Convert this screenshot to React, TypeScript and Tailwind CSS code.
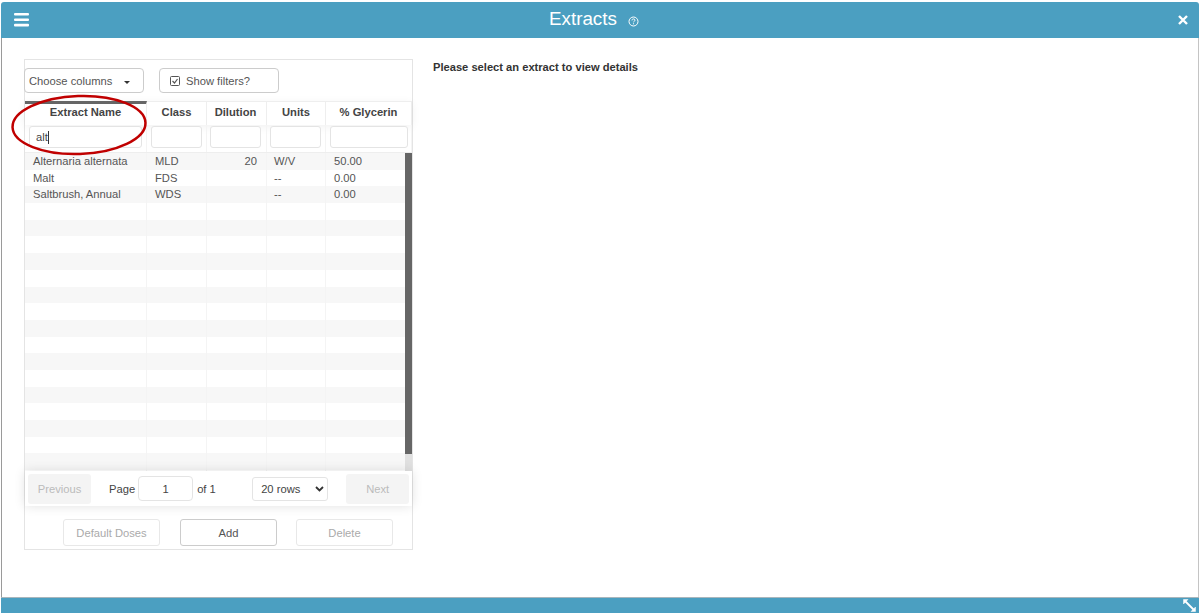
import React from "react";

const cols = [
  { name: "Extract Name", w: "w-[122px]", input: "w-[113px]" },
  { name: "Class", w: "w-[60px]", input: "w-[51px]" },
  { name: "Dilution", w: "w-[60px]", input: "w-[51px]" },
  { name: "Units", w: "w-[59px]", input: "w-[51px]" },
  { name: "% Glycerin", w: "w-[86px]", input: "w-[78px]" },
];

const data = [
  ["Alternaria alternata", "MLD", "20", "W/V", "50.00"],
  ["Malt", "FDS", "", "--", "0.00"],
  ["Saltbrush, Annual", "WDS", "", "--", "0.00"],
];

const rows: string[][] = [...data, ...Array.from({ length: 17 }, () => ["", "", "", "", ""])];

export default function App() {
  return (
    <div className="w-[1201px] h-[613px] overflow-hidden bg-white flex flex-col pt-[2px] pl-[1px] pr-[2px] text-[#333] text-[11.200px] font-['Liberation_Sans',Arial,sans-serif]">
      <header className="h-[36px] shrink-0 bg-[#4b9fc1] rounded-t-[3px] flex items-center justify-between pl-[13px] pr-[11px] relative">
        <svg width="15" height="14" viewBox="0 0 15 14" fill="#fff" className="mt-[-1px]">
          <rect x="0" y="0" width="15" height="2.6" rx="1" />
          <rect x="0" y="5.4" width="15" height="2.6" rx="1" />
          <rect x="0" y="10.8" width="15" height="2.6" rx="1" />
        </svg>
        <div className="absolute left-[548px] top-0 h-full flex items-center gap-[11px] text-white">
          <span className="text-[18.800px] leading-none mt-[-1px]">Extracts</span>
          <svg width="11" height="11" viewBox="0 0 11 11" fill="none" stroke="#fff" className="mt-[2px]">
            <circle cx="5.5" cy="5.5" r="4.5" strokeWidth="1" />
            <path d="M4 4.4c0-1 .7-1.5 1.5-1.5S7 3.400 7 4.200c0 1-1.500 1-1.500 2.100" strokeWidth="1" />
            <path d="M5.500 7.300v1" strokeWidth="1.100" />
          </svg>
        </div>
        <svg width="10" height="10" viewBox="0 0 10 10" stroke="#fff" strokeWidth="2.400">
          <path d="M1 1l8 8M9 1l-8 8" />
        </svg>
      </header>

      <main className="flex-1 min-h-0 border-x border-[#9a9a9a] border-r-[#c4c4c4] pl-[22px] pt-[21px] flex items-start">
        <section className="w-[389px] h-[491px] border border-[#e4e4e4] flex flex-col relative">
          <div className="h-[41px] shrink-0 pt-[8px] ml-[-1px] flex items-start">
            <div className="w-[120px] h-[25px] border border-[#ccc] rounded-[4px] flex items-center pl-[4px] pt-[1px] text-[#555]">
              <span>Choose columns</span>
              <svg width="6" height="3" viewBox="0 0 6 3" fill="#333" className="ml-[12px] mt-[3px]">
                <path d="M0 0h6L3 3z" />
              </svg>
            </div>
            <div className="w-[120px] h-[25px] ml-[15px] border border-[#ccc] rounded-[4px] flex items-center pl-[10px] pt-[1px] text-[#555]">
              <svg width="10" height="10" viewBox="0 0 10 10" fill="none" stroke="#555" className="mr-[6px]">
                <rect x="0.500" y="0.500" width="9" height="9" rx="1" />
                <path d="M2.500 5l2 2 3-4" strokeWidth="1.200" />
              </svg>
              <span>Show filters?</span>
            </div>
          </div>

          <div className="flex h-[24px] shrink-0 shadow-[0_2px_10px_rgba(0,0,0,0.06)]">
            {cols.map((c, i) => (
              <div
                key={c.name}
                className={`${c.w} flex items-center justify-center font-bold text-[#444] text-[11.200px] border-r border-[#eee] ${i === 0 ? "border-t-[3px] border-t-[#666] pb-[5px]" : "border-t border-t-[#eee] pb-[2px]"} ${i === 2 ? "pr-[2px]" : ""}`}
              >
                {c.name}
              </div>
            ))}
          </div>
          <div className="flex h-[28px] shrink-0 border-b border-[#eee]">
            {cols.map((c, i) => (
              <div key={c.name} className={`${c.w} flex justify-center pt-[1px] border-r border-[#f4f4f4] ${i === 2 || i === 3 ? "pr-[2px]" : ""}`}>
                <div className={`${c.input} h-[22px] border border-[#e4e4e4] rounded-[3px] bg-white flex items-center pl-[6px] text-[#444]`}>
                  {i === 0 && (
                    <>
                      <span>alt</span>
                      <span className="w-px h-[13px] bg-[#333]" />
                    </>
                  )}
                </div>
              </div>
            ))}
          </div>

          <div className="relative flex-1 min-h-0 overflow-hidden">
            {rows.map((r, ri) => (
              <div key={ri} className={`flex h-[16.700px] leading-[16.700px] text-[#555] ${ri % 2 === 0 ? "bg-[#f7f7f7]" : "bg-white"}`}>
                {r.map((v, ci) => (
                  <div
                    key={ci}
                    className={`${cols[ci].w} border-r border-[#f4f4f4] ${ci === 2 ? "text-right pr-[9px]" : ci === 3 ? "pl-[7px]" : "pl-[8px]"}`}
                  >
                    {v}
                  </div>
                ))}
              </div>
            ))}
            <div className="absolute right-0 top-0 bottom-0 w-[7px] bg-[#e0e0e0]">
              <div className="h-[301px] bg-[#666]" />
            </div>
          </div>

          <div className="h-[35px] shrink-0 flex items-center pl-[3px] bg-white shadow-[0_0_12px_rgba(0,0,0,0.12)] relative">
            <div className="w-[63px] h-[30px] pt-[1px] bg-[#f4f4f4] rounded-[3px] flex items-center justify-center text-[#bbb]">Previous</div>
            <span className="ml-[18px] pt-[1px] text-[#444] whitespace-nowrap">Page</span>
            <div className="w-[55px] h-[25px] ml-[3px] pt-[1px] border border-[#e4e4e4] rounded-[4px] flex items-center justify-center text-[#444]">1</div>
            <span className="ml-[4px] pt-[1px] text-[#444] whitespace-nowrap w-[18px]">of 1</span>
            <div className="w-[76px] h-[24px] ml-[37px] pt-[1px] border border-[#e4e4e4] rounded-[3px] flex items-center justify-between pl-[8px] pr-[3px] text-[#444]">
              <span>20 rows</span>
              <svg width="9" height="6" viewBox="0 0 9 6" fill="none" stroke="#333" strokeWidth="1.800">
                <path d="M1 1l3.500 3.500L8 1" />
              </svg>
            </div>
            <div className="w-[63px] h-[30px] ml-[18px] pt-[1px] bg-[#f4f4f4] rounded-[3px] flex items-center justify-center text-[#bbb]">Next</div>
          </div>

          <div className="h-[43px] shrink-0 flex items-start pt-[13px] pl-[38px]">
            <div className="w-[97px] h-[27px] pt-[1px] border border-[#e8e8e8] rounded-[3px] flex items-center justify-center text-[#aaa]">Default Doses</div>
            <div className="w-[97px] h-[27px] pt-[1px] ml-[20px] border border-[#ccc] rounded-[3px] flex items-center justify-center text-[#555]">Add</div>
            <div className="w-[97px] h-[27px] pt-[1px] ml-[19px] border border-[#e8e8e8] rounded-[3px] flex items-center justify-center text-[#aaa]">Delete</div>
          </div>

          <svg width="140" height="66" viewBox="0 0 140 66" fill="none" className="absolute left-[-15px] top-[32px] pointer-events-none">
            <ellipse cx="69" cy="33" rx="66.500" ry="29" stroke="#c00000" strokeWidth="2.500" transform="rotate(-2 69 33)" />
          </svg>
        </section>
        <p className="ml-[20px] mt-[2px] font-bold text-[11.150px] leading-[13px] text-[#333]">Please select an extract to view details</p>
      </main>

      <footer className="h-[16px] shrink-0 bg-[#4b9fc1] border-t border-[#a9b6bc] flex items-center justify-end pr-[3px]">
        <svg width="13" height="13" viewBox="0 0 13 13" fill="#fff" stroke="#fff">
          <path d="M2.500 2.500l8 8" strokeWidth="1.800" />
          <path d="M0.500 0.500h4.500l-4.500 4.500zM12.500 12.500h-4.500l4.500-4.500z" strokeWidth="0.500" />
        </svg>
      </footer>
    </div>
  );
}
